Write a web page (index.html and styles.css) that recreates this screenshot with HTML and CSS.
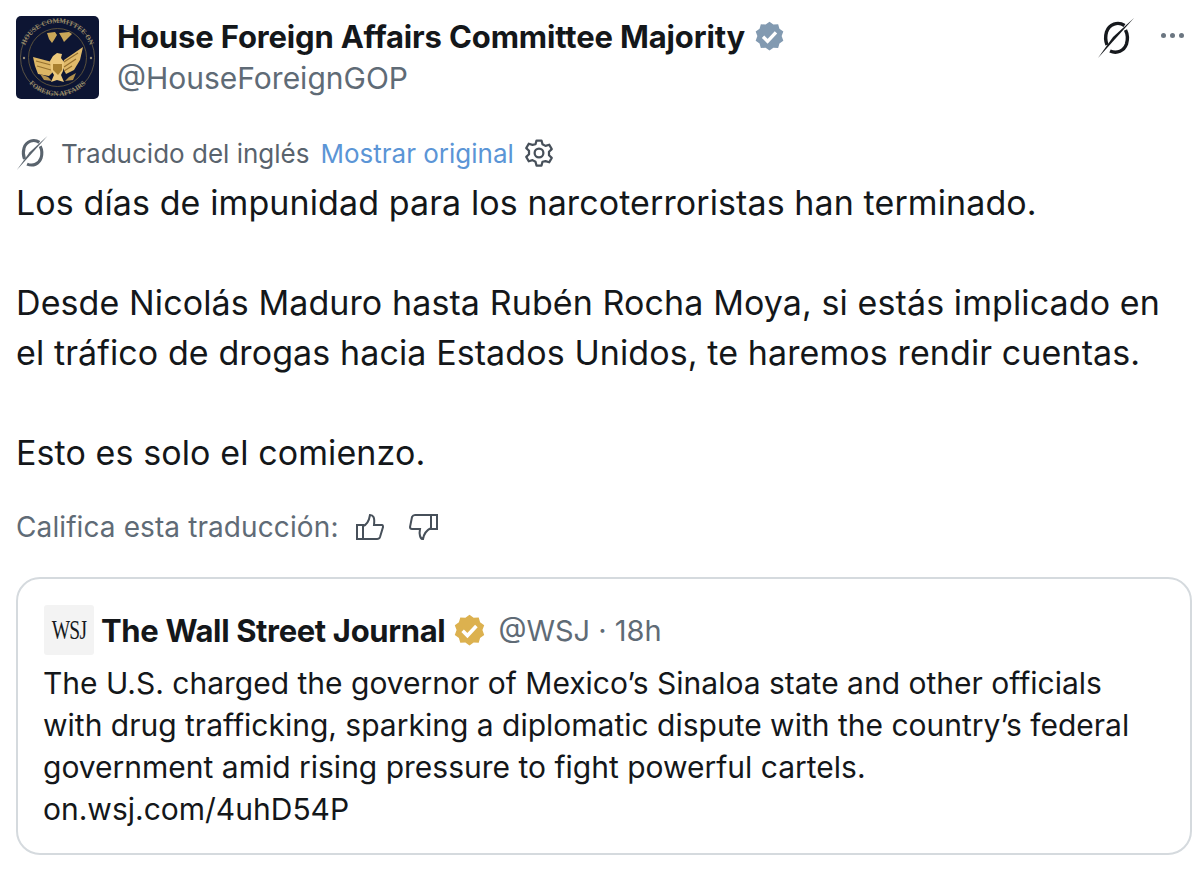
FILE: index.html
```html
<!DOCTYPE html>
<html lang="es">
<head>
  <meta charset="UTF-8">
  <title>House Foreign Affairs Committee Majority</title>
  <link rel="stylesheet" href="styles.css">
</head>
<body>

  <div class="post">
    <div class="post-head">
      <svg class="avatar" viewBox="0 0 83 83">
        <defs>
          <path id="ringTop" d="M7 41.500a34.500 34.500 0 0 1 69 0"/>
          <path id="ringBottom" d="M3 41.500a38.500 38.500 0 0 0 77 0"/>
        </defs>
        <rect width="83" height="83" rx="5" fill="#0d1533"/>
        <circle cx="41.500" cy="41.500" r="37" fill="none" stroke="#6d6248" stroke-width=".8"/>
        <circle cx="41.500" cy="41.500" r="29" fill="none" stroke="#6d5f3e" stroke-width=".8"/>
        <text class="seal-text"><textPath href="#ringTop" startOffset="50%" text-anchor="middle">HOUSE COMMITTEE ON</textPath></text>
        <text class="seal-text"><textPath href="#ringBottom" startOffset="50%" text-anchor="middle">FOREIGN AFFAIRS</textPath></text>
        <circle cx="8" cy="42" r="1.200" fill="#9a9078"/>
        <circle cx="75" cy="42" r="1.200" fill="#9a9078"/>
        <path d="M31 17l8-1 2 3-3 5-2 3-3-4zM43 17l10-1 3 2-4 4-4 4-2-4z" fill="#c9a659"/>
        <path d="M17 41l19 5 1 10-4 4-11-2-3-8z" fill="#dcb665"/>
        <path d="M67 31l-3 13-6 10-8 4-4-8 2-6z" fill="#e0ba6a"/>
        <path d="M20 45l15 4M21 50l14 4M62 37l-14 9M60 43l-12 8M56 50l-8 5" stroke="#96712f" stroke-width="1.200"/>
        <path d="M37 40l4-3 5 1-1 4 3 4-1 9-2 4 3 7-7-2-6 2 3-7-3-5-1-9z" fill="#ecc97c"/>
        <path d="M37 48h9v6l-4 5-5-5z" fill="#a9812f"/>
        <path d="M24 58l8 3 4 4-8-1zM60 57l-7 4-4 4 8-1z" fill="#b08f4c"/>
      </svg>
      <div class="names">
        <div class="name-row">
          <span class="name">House Foreign Affairs Committee Majority</span>
          <svg class="badge" viewBox="0 0 24 24"><path d="M12 .5l3 2.200 3.700-.2 1 3.500 3 2.200-1.300 3.500 1.300 3.500-3 2.200-1 3.500-3.700-.2-3 2.200-3-2.200-3.700.2-1-3.500-3-2.200L2.600 11.700 1.300 8.200l3-2.200 1-3.500L9 2.700z" fill="#829ab1"/><path d="M7 12.200l3.500 3.500L17 8.800" fill="none" stroke="#fff" stroke-width="2.600"/></svg>
        </div>
        <div class="handle">@HouseForeignGOP</div>
      </div>
      <div class="head-actions">
        <svg class="grok grok-big" viewBox="0 0 40 40"><path d="M27.500 7.500C21 3 12 6 9.500 14c-1.500 5-1 9 .5 13M13 33c7 3 14 0 16.500-7 1.500-5 1-10-1-14" fill="none" stroke="#16191d" stroke-width="3.400"/><path d="M37 0L1 40l15-21z" fill="#16191d"/></svg>
        <span class="dots"><i></i><i></i><i></i></span>
      </div>
    </div>

    <div class="translated">
      <svg class="grok" viewBox="0 0 40 40"><path d="M27.500 7.500C21 3 12 6 9.500 14c-1.500 5-1 9 .5 13M13 33c7 3 14 0 16.500-7 1.500-5 1-10-1-14" fill="none" stroke="#59636d" stroke-width="3.600"/><path d="M37 0L1 40l15-21z" fill="#59636d"/></svg>
      <span>Traducido del inglés</span>
      <span class="link">Mostrar original</span>
      <svg class="gear" viewBox="0 0 24 24"><path d="M10 2h4l.8 3 2.400 1.300 3-.9 2 3.500-2.200 2.100v2.800l2.200 2.100-2 3.500-3-.9L14.800 19l-.8 3h-4l-.8-3-2.400-1.300-3 .9-2-3.500L4 13v-2.800L1.800 8.100l2-3.500 3 .9L9.200 5z" fill="none" stroke="#47505a" stroke-width="1.800" stroke-linejoin="round"/><circle cx="12" cy="12" r="3.500" fill="none" stroke="#47505a" stroke-width="1.800"/></svg>
    </div>

    <div class="post-text">
      <p>Los días de impunidad para los narcoterroristas han terminado.</p>
      <p>Desde Nicolás Maduro hasta Rubén Rocha Moya, si estás implicado en<br>el tráfico de drogas hacia Estados Unidos, te haremos rendir cuentas.</p>
      <p>Esto es solo el comienzo.</p>
    </div>

    <div class="rate">
      <span>Califica esta traducción:</span>
      <svg class="thumb" viewBox="0 0 30 30"><path d="M2 13h6v14H2zM8 14c3-1 6-5 7-11 3 0 5 2 4 10h8c1 0 1 1 1 2l-3 10c-.5 1.500-1 2-3 2H8z" fill="none" stroke="#47505a" stroke-width="2"/></svg>
      <svg class="thumb" viewBox="0 0 30 30"><path d="M22 3h6v14h-6zM22 3H6C4 3 3.500 4 3 5L1 15c0 1 0 2 2 2h8c-1 5 0 10 3 10 1-6 4-9 8-11" fill="none" stroke="#47505a" stroke-width="2"/></svg>
    </div>

    <div class="quote">
      <div class="quote-head">
        <span class="wsj-logo"><span>WSJ</span></span>
        <span class="quote-name">The Wall Street Journal</span>
        <svg class="badge badge-small" viewBox="0 0 24 24"><path d="M12 .5l3 2.200 3.700-.2 1 3.500 3 2.200-1.300 3.500 1.300 3.500-3 2.200-1 3.500-3.700-.2-3 2.200-3-2.200-3.700.2-1-3.500-3-2.200L2.600 11.700 1.300 8.200l3-2.200 1-3.500L9 2.700z" fill="#dcb14f"/><path d="M7 12.200l3.500 3.500L17 8.800" fill="none" stroke="#fff" stroke-width="2.600"/></svg>
        <span class="quote-meta">@WSJ · 18h</span>
      </div>
      <p class="quote-text">The U.S. charged the governor of Mexico’s Sinaloa state and other officials<br>with drug trafficking, sparking a diplomatic dispute with the country’s federal<br>government amid rising pressure to fight powerful cartels.<br>on.wsj.com/4uhD54P</p>
    </div>
  </div>

</body>
</html>
```

FILE: styles.css
```css
body {
  margin: 0;
  background: #fff;
  color: #14171a;
  font-family: "Inter", "Liberation Sans", sans-serif;
}

.post {
  padding: 16px 8px 0 16px;
}

.post-head {
  display: flex;
  align-items: flex-start;
}

.avatar {
  width: 83px;
  height: 83px;
  flex: none;
}

.seal-text {
  fill: #9a8d6c;
  font-family: "Liberation Serif", serif;
  font-size: 7px;
  font-weight: 700;
}

.names {
  margin: -1px 0 0 18px;
  flex: 1;
}

.name-row {
  display: flex;
  align-items: center;
  height: 42px;
}

.name {
  font-size: 31px;
  font-weight: 700;
  letter-spacing: -0.15px;
}

.badge {
  width: 31px;
  height: 31px;
  margin-left: 9px;
}

.handle {
  color: #5f6b76;
  font-size: 30px;
  line-height: 42px;
}

.head-actions {
  display: flex;
  align-items: center;
  gap: 24px;
  padding: 2px 8px 0 0;
}

.grok {
  width: 34px;
  height: 34px;
  flex: none;
}

.grok-big {
  width: 40px;
  height: 40px;
}

.dots {
  display: flex;
  gap: 4px;
  margin-top: -6px;
}

.dots i {
  width: 5px;
  height: 5px;
  border-radius: 50%;
  background: #6b7681;
}

.translated {
  display: flex;
  align-items: center;
  margin-top: 35px;
  height: 38px;
  color: #59636d;
  font-size: 26px;
}

.translated span {
  margin-left: 11px;
}

.translated .link {
  color: #5b95d6;
}

.gear {
  width: 30px;
  height: 30px;
  margin-left: 10px;
}

.post-text {
  margin-top: 6px;
  font-size: 34px;
  line-height: 50px;
  letter-spacing: 0.1px;
}

.post-text p {
  margin: 0 0 50px;
}

.post-text p:last-child {
  margin-bottom: 0;
}

.rate {
  display: flex;
  align-items: center;
  gap: 24px;
  margin-top: 29px;
  height: 40px;
  color: #5f6b76;
  font-size: 28px;
  letter-spacing: 0.1px;
}

.thumb {
  width: 30px;
  height: 30px;
}

.rate span {
  margin-right: -8px;
}

.quote {
  margin-top: 30px;
  height: 278px;
  box-sizing: border-box;
  padding: 26px 24px 0 26px;
  border: 2px solid #d5dade;
  border-radius: 24px;
}

.quote-head {
  display: flex;
  align-items: center;
  height: 50px;
}

.wsj-logo {
  width: 50px;
  height: 50px;
  flex: none;
  display: flex;
  align-items: center;
  justify-content: center;
  border-radius: 3px;
  background: #f3f3f3;
  color: #16191d;
  font-family: "Liberation Serif", serif;
  font-size: 27px;
  letter-spacing: -1px;
}

.wsj-logo span {
  transform: scaleX(0.72);
}

.quote-name {
  margin-left: 7px;
  font-size: 31px;
  font-weight: 700;
  letter-spacing: -0.35px;
}

.badge-small {
  margin-left: 8px;
  width: 33px;
  height: 33px;
}

.quote-meta {
  margin-left: 12px;
  color: #5f6b76;
  font-size: 29px;
}

.quote-text {
  margin: 7px 0 0 -1px;
  font-size: 30px;
  line-height: 42px;
}
```
